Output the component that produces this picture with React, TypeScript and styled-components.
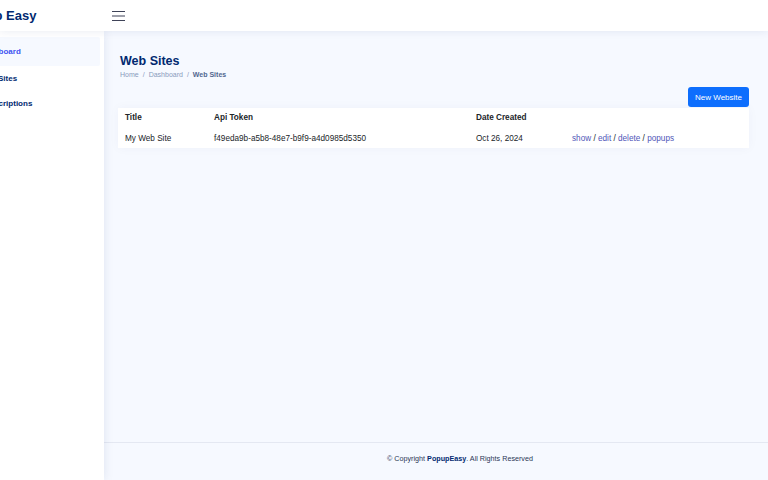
import styled, { createGlobalStyle } from "styled-components";

const GlobalStyle = createGlobalStyle`
  html, body {
    margin: 0;
    padding: 0;
    background: #f6f9ff;
    font-family: "Liberation Sans", Arial, sans-serif;
  }
`;

const Page = styled.div`
  display: flex;
  flex-direction: column;
  width: 768px;
  height: 480px;
  overflow: hidden;
  background: #f6f9ff;
`;

const Header = styled.header`
  display: flex;
  align-items: center;
  height: 31px;
  background: #fff;
  box-shadow: 0 1px 8px rgba(1, 41, 112, 0.08);
  position: relative;
  z-index: 2;
  flex-shrink: 0;
`;

const LogoBox = styled.div`
  width: 104px;
  overflow: hidden;
  flex-shrink: 0;
`;

const Logo = styled.span`
  display: block;
  margin-left: -38px;
  font-size: 13px;
  font-weight: 700;
  color: #012970;
  white-space: nowrap;
`;

const Toggle = styled.button`
  display: flex;
  align-items: center;
  border: 0;
  background: none;
  padding: 0;
  margin-left: 8px;
  cursor: pointer;
`;

const Body = styled.div`
  display: flex;
  flex: 1;
  min-height: 0;
`;

const Sidebar = styled.aside`
  width: 104px;
  flex-shrink: 0;
  background: #fff;
  box-shadow: 0 0 10px rgba(1, 41, 112, 0.1);
  overflow: hidden;
  padding-top: 6px;
  position: relative;
  z-index: 1;
`;

const NavList = styled.ul`
  list-style: none;
  margin: 0 4px 0 -30px;
  padding: 0;
  display: flex;
  flex-direction: column;
`;

const NavItem = styled.li<{ $active?: boolean }>`
  display: flex;
  align-items: center;
  height: 25px;
  padding-left: 9px;
  font-size: 8px;
  font-weight: 700;
  white-space: nowrap;
  color: ${(p) => (p.$active ? "#4154f1" : "#012970")};
  background: ${(p) => (p.$active ? "#f6f9ff" : "transparent")};
  border-radius: 2px;
  &:first-child {
    height: 29px;
  }
`;

const Main = styled.div`
  flex: 1;
  display: flex;
  flex-direction: column;
  min-width: 0;
`;

const Content = styled.main`
  flex: 1;
  padding: 23px 19px 0 16px;
`;

const PageTitle = styled.h1`
  margin: 0;
  font-size: 12.5px;
  font-weight: 700;
  color: #012970;
`;

const Breadcrumb = styled.nav`
  display: flex;
  gap: 4px;
  margin-top: 3px;
  font-size: 7px;
  color: #899bbd;
`;

const Crumb = styled.span<{ $current?: boolean }>`
  color: ${(p) => (p.$current ? "#51678f" : "#899bbd")};
  font-weight: ${(p) => (p.$current ? 700 : 400)};
`;

const Toolbar = styled.div`
  display: flex;
  justify-content: flex-end;
  margin-top: 9px;
  margin-bottom: 1px;
`;

const PrimaryButton = styled.button`
  height: 20px;
  padding: 0 7px;
  border: 0;
  border-radius: 3px;
  background: #0d6efd;
  color: #fff;
  font-family: "Liberation Sans", Arial, sans-serif;
  font-size: 8px;
  cursor: pointer;
`;

const Card = styled.div`
  background: #fff;
  margin-left: -2px;
  box-shadow: 0 0 10px rgba(1, 41, 112, 0.04);
`;

const Table = styled.table`
  width: 100%;
  table-layout: fixed;
  border-collapse: collapse;
  font-size: 8.2px;
  color: #212529;
`;

const Th = styled.th<{ $w?: number }>`
  text-align: left;
  font-weight: 700;
  padding: 0 7px;
  height: 19px;
  vertical-align: middle;
  width: ${(p) => (p.$w ? `${p.$w}px` : "auto")};
`;

const Td = styled.td`
  padding: 1px 7px 0;
  height: 20px;
  vertical-align: middle;
  white-space: nowrap;
`;

const ActionLink = styled.a`
  color: #4f56b8;
  text-decoration: none;
`;

const Sep = styled.span`
  color: #212529;
`;

const Footer = styled.footer`
  border-top: 1px solid #e4e8f2;
  height: 38px;
  display: flex;
  justify-content: center;
  padding: 11px 0 0 48px;
  box-sizing: border-box;
  font-size: 7.2px;
  color: #2b3656;
  flex-shrink: 0;
`;

const Brand = styled.b`
  color: #012970;
`;

const MenuIcon = () => (
  <svg width="13" height="12" viewBox="0 0 13 12" fill="none">
    <path d="M0.5 1.5h12M0.5 6h12M0.5 10.5h12" stroke="#3f4358" strokeWidth="1.2" strokeLinecap="round" />
  </svg>
);

const sites = [
  {
    title: "My Web Site",
    token: "f49eda9b-a5b8-48e7-b9f9-a4d0985d5350",
    created: "Oct 26, 2024",
  },
];

const App = () => {
  return (
    <Page>
      <GlobalStyle />
      <Header>
        <LogoBox>
          <Logo>Popup Easy</Logo>
        </LogoBox>
        <Toggle aria-label="Toggle sidebar">
          <MenuIcon />
        </Toggle>
      </Header>
      <Body>
        <Sidebar>
          <NavList>
            <NavItem $active>Dashboard</NavItem>
            <NavItem>Web Sites</NavItem>
            <NavItem>Subscriptions</NavItem>
          </NavList>
        </Sidebar>
        <Main>
          <Content>
            <PageTitle>Web Sites</PageTitle>
            <Breadcrumb>
              <Crumb>Home</Crumb>
              <span>/</span>
              <Crumb>Dashboard</Crumb>
              <span>/</span>
              <Crumb $current>Web Sites</Crumb>
            </Breadcrumb>
            <Toolbar>
              <PrimaryButton>New Website</PrimaryButton>
            </Toolbar>
            <Card>
              <Table>
                <thead>
                  <tr>
                    <Th $w={75}>Title</Th>
                    <Th $w={248}>Api Token</Th>
                    <Th $w={82}>Date Created</Th>
                    <Th></Th>
                  </tr>
                </thead>
                <tbody>
                  {sites.map((site) => (
                    <tr key={site.token}>
                      <Td>{site.title}</Td>
                      <Td>{site.token}</Td>
                      <Td>{site.created}</Td>
                      <Td>
                        <ActionLink href="#">show</ActionLink> <Sep>/</Sep>{" "}
                        <ActionLink href="#">edit</ActionLink> <Sep>/</Sep>{" "}
                        <ActionLink href="#">delete</ActionLink> <Sep>/</Sep>{" "}
                        <ActionLink href="#">popups</ActionLink>
                      </Td>
                    </tr>
                  ))}
                </tbody>
              </Table>
            </Card>
          </Content>
          <Footer>
            <span>
              © Copyright <Brand>PopupEasy</Brand>. All Rights Reserved
            </span>
          </Footer>
        </Main>
      </Body>
    </Page>
  );
};

export default App;
